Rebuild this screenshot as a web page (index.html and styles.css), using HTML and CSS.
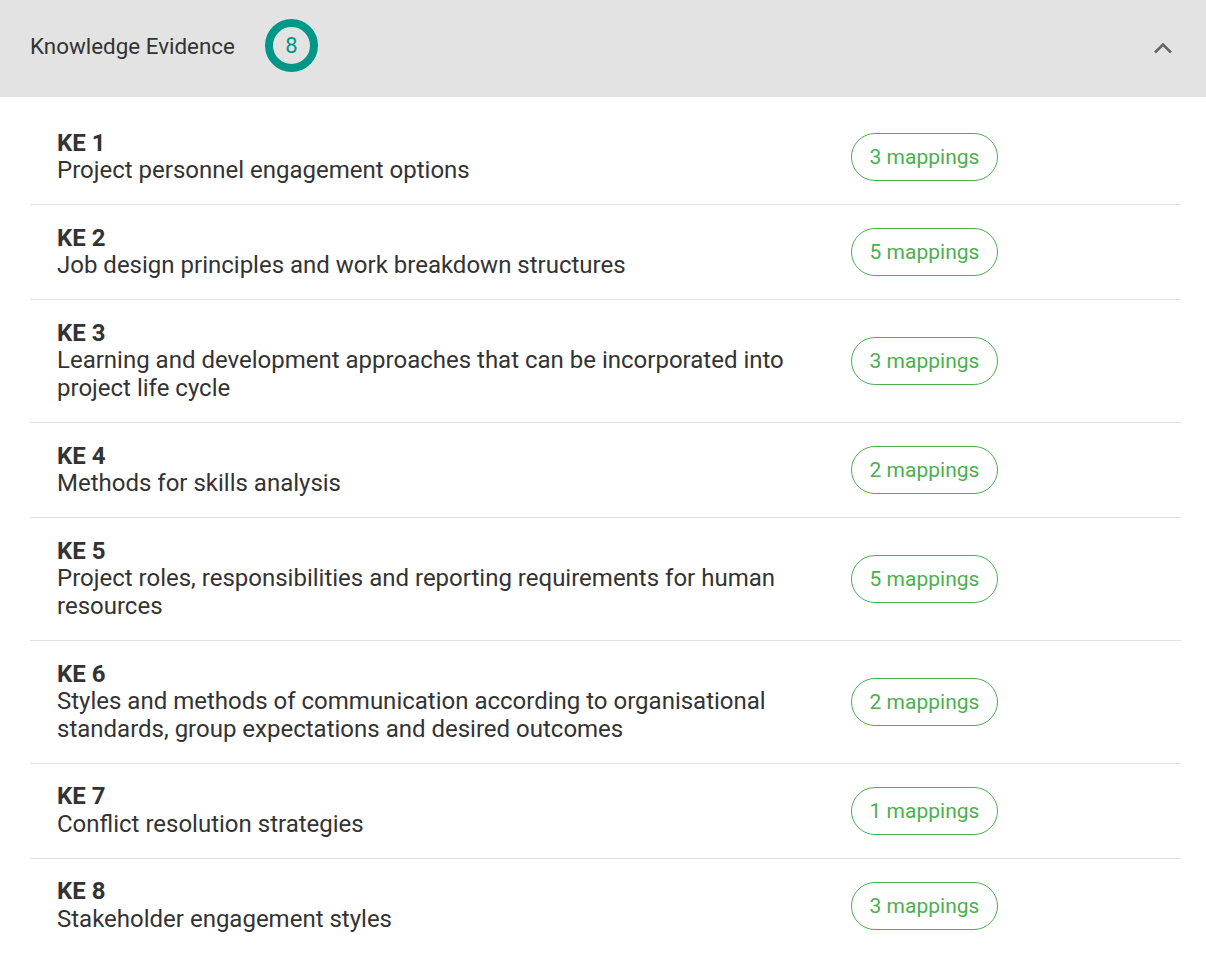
FILE: index.html
```html
<!DOCTYPE html>
<html lang="en">
<head>
<meta charset="UTF-8">
<meta name="viewport" content="width=device-width, initial-scale=1.0">
<title>Knowledge Evidence</title>
<link rel="stylesheet" href="styles.css">
</head>
<body>
  <div class="panel">
    <div class="panel-header">
      <span class="panel-title">Knowledge Evidence</span>
      <span class="count-badge">8</span>
      <svg class="chevron" width="20" height="12" viewBox="0 0 20 12">
        <path d="M2 10.5l8-8 8 8" fill="none" stroke="#666" stroke-width="2.6"/>
      </svg>
    </div>
    <ul class="evidence-list">
      <li class="evidence-item">
        <div class="item-text">
          <div class="item-code">KE 1</div>
          <div class="item-desc">Project personnel engagement options</div>
        </div>
        <span class="mapping-pill">3 mappings</span>
      </li>
      <li class="evidence-item">
        <div class="item-text">
          <div class="item-code">KE 2</div>
          <div class="item-desc">Job design principles and work breakdown structures</div>
        </div>
        <span class="mapping-pill">5 mappings</span>
      </li>
      <li class="evidence-item">
        <div class="item-text">
          <div class="item-code">KE 3</div>
          <div class="item-desc">Learning and development approaches that can be incorporated into project life cycle</div>
        </div>
        <span class="mapping-pill">3 mappings</span>
      </li>
      <li class="evidence-item">
        <div class="item-text">
          <div class="item-code">KE 4</div>
          <div class="item-desc">Methods for skills analysis</div>
        </div>
        <span class="mapping-pill">2 mappings</span>
      </li>
      <li class="evidence-item">
        <div class="item-text">
          <div class="item-code">KE 5</div>
          <div class="item-desc">Project roles, responsibilities and reporting requirements for human resources</div>
        </div>
        <span class="mapping-pill">5 mappings</span>
      </li>
      <li class="evidence-item">
        <div class="item-text">
          <div class="item-code">KE 6</div>
          <div class="item-desc">Styles and methods of communication according to organisational standards, group expectations and desired outcomes</div>
        </div>
        <span class="mapping-pill">2 mappings</span>
      </li>
      <li class="evidence-item">
        <div class="item-text">
          <div class="item-code">KE 7</div>
          <div class="item-desc">Conflict resolution strategies</div>
        </div>
        <span class="mapping-pill">1 mappings</span>
      </li>
      <li class="evidence-item">
        <div class="item-text">
          <div class="item-code">KE 8</div>
          <div class="item-desc">Stakeholder engagement styles</div>
        </div>
        <span class="mapping-pill">3 mappings</span>
      </li>
    </ul>
  </div>
</body>
</html>
```

FILE: styles.css
```css
body {
  font-family: Roboto, "Noto Sans", sans-serif;
  background-color: #fff;
  color: #333;
  margin: 0;
  padding: 0;
}
.panel {
  width: 1206px;
}
.panel-header {
  display: flex;
  align-items: center;
  height: 97px;
  padding: 0 30px 6px;
  background-color: #e3e3e3;
  box-sizing: border-box;
}
.panel-title {
  font-size: 22.4px;
  color: #333;
}
.count-badge {
  display: inline-flex;
  align-items: center;
  justify-content: center;
  width: 37px;
  height: 37px;
  margin-left: 30px;
  border: 8px solid #009688;
  border-radius: 50%;
  color: #009688;
  font-size: 22px;
}
.chevron {
  margin-left: auto;
  margin-right: 3px;
  margin-top: 5px;
}
.evidence-list {
  list-style-type: none;
  margin: 0 25px 0 30px;
  padding: 13px 0 0;
}
.evidence-item {
  display: flex;
  align-items: center;
  padding: 19.6px 0 19.6px 27px;
  border-bottom: 1px solid #e0e0e0;
}
.evidence-item:last-child {
  border-bottom: none;
}
.item-text {
  width: 770px;
  font-size: 24px;
  line-height: 27.5px;
}
.item-code {
  font-weight: 700;
}
.mapping-pill {
  display: inline-block;
  margin-left: 24px;
  width: 147px;
  height: 48px;
  line-height: 46px;
  box-sizing: border-box;
  border: 1px solid #4caf50;
  border-radius: 24px;
  color: #4caf50;
  font-size: 21px;
  text-align: center;
}
```
